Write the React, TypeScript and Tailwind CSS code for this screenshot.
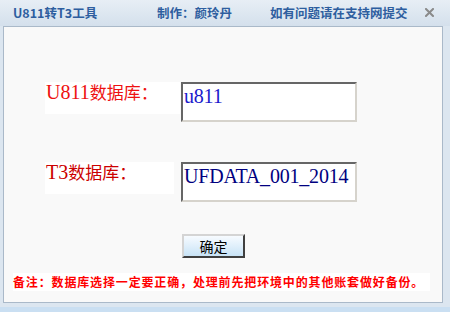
const cjk = "font-['Noto_Sans_CJK_SC',sans-serif] [text-spacing-trim:space-all]";
const serif = "font-['Liberation_Serif','Noto_Sans_CJK_SC',serif]";

function Label({ latin, text, width, color }: { latin: string; text: string; width: string; color: string }) {
  return (
    <div className={`${width} h-[32px] bg-white flex items-start pl-[1px] ${color}`}>
      <span className={`${serif} text-[20px] leading-[20px]`}>{latin}</span>
      <span className={`${cjk} text-[17px] leading-[20px]`}>{text}</span>
    </div>
  );
}

function Field({ value, color }: { value: string; color: string }) {
  return (
    <div
      className={`w-[176px] h-[40px] bg-white border-2 border-t-[#666666] border-l-[#666666] border-b-[#d6d3cc] border-r-[#d6d3cc] pl-[1px] pt-[2px] ${serif} text-[20px] tracking-[-0.2px] leading-[20px] ${color}`}
    >
      {value}
    </div>
  );
}

export default function App() {
  return (
    <div className="w-[450px] h-[312px] bg-[#dce6f0] flex flex-col overflow-hidden">
      <div className={`h-[26px] flex items-center whitespace-nowrap bg-gradient-to-b from-[#e7eef5] to-[#d4e0ec] text-[#2e5e9f] font-bold text-[12.5px] ${cjk}`}>
        <span className="ml-[13px] w-[144px]">U811转T3工具</span>
        <span className="w-[113px]">制作：颜玲丹</span>
        <span className="w-[155px]">如有问题请在支持网提交</span>
        <svg width="9" height="9" viewBox="0 0 9 9" className="mt-[-1px]">
          <path d="M1 1 L8 8 M8 1 L1 8" stroke="#8a8a8a" strokeWidth="2" strokeLinecap="square" />
        </svg>
      </div>
      <div className="ml-[3px] w-[440px] h-[277px] border border-[#aab9c9] bg-[#f9f9f9] flex flex-col">
        <div className="mt-[55px] ml-[41px] flex">
          <Label latin="U811" text="数据库：" width="w-[135px]" color="text-[#ee1111]" />
          <div className="ml-[1px]">
            <Field value="u811" color="text-[#1a1acc]" />
          </div>
        </div>
        <div className="mt-[40px] ml-[41px] flex">
          <Label latin="T3" text="数据库：" width="w-[129px]" color="text-[#cc0000]" />
          <div className="ml-[7px]">
            <Field value="UFDATA_001_2014" color="text-[#000080]" />
          </div>
        </div>
        <div className="mt-[32px] ml-[178px]">
          <button className={`w-[63px] h-[24px] border-2 border-t-[#d4d4d4] border-l-[#d4d4d4] border-b-[#404040] border-r-[#404040] bg-gradient-to-b from-[#f7fbff] to-[#c8e3f6] text-black text-[14px] leading-[20px] ${cjk}`}>
            确定
          </button>
        </div>
        <div className={`mt-[15px] ml-[9px] w-[417px] h-[18px] bg-white text-[#ff0000] font-bold text-[12px] tracking-[0.85px] leading-[18px] whitespace-nowrap ${cjk}`}>
          备注：数据库选择一定要正确，处理前先把环境中的其他账套做好备份。
        </div>
      </div>
      <div className="flex-1 flex flex-col">
        <div className="h-[4px] bg-[#dce6f0]" />
        <div className="flex-1 bg-[#cadff2]" />
      </div>
    </div>
  );
}
